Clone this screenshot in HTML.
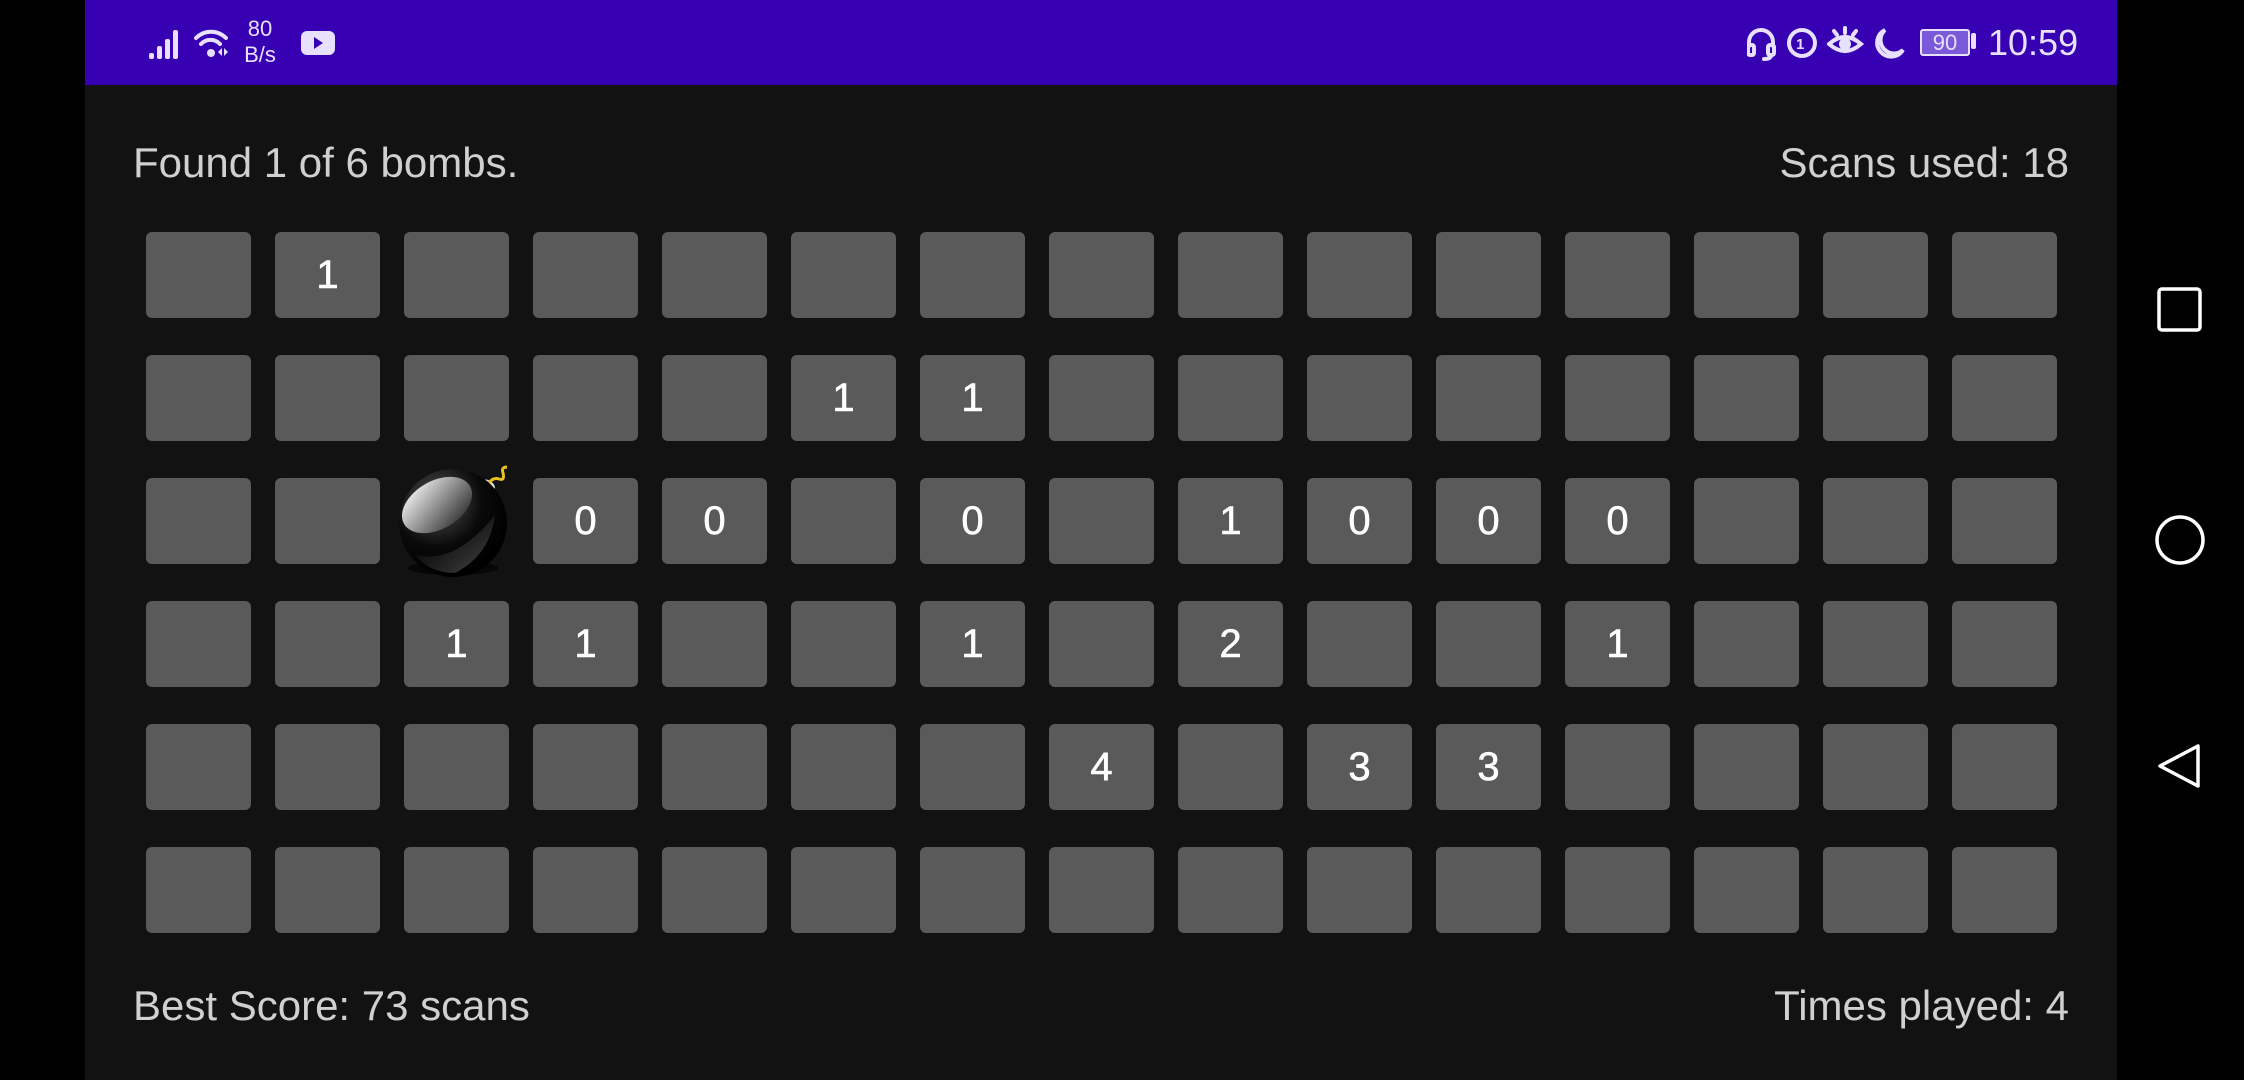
<!DOCTYPE html>
<html><head><meta charset="utf-8"><style>
body{margin:0;width:2244px;height:1080px;background:#000;position:relative;overflow:hidden;font-family:"Liberation Sans",Roboto,sans-serif}
#app{position:absolute;left:85px;top:0;width:2032px;height:1080px;background:#121212}
#sb{position:absolute;left:0;top:0;width:2032px;height:85px;background:#3700b3;color:#e8e0ff}
.t{position:absolute;color:#d0d0d0;font-size:42px;line-height:48px}
#grid{position:absolute;left:61px;top:232px;display:grid;grid-template-columns:repeat(15,105px);grid-auto-rows:86px;column-gap:24px;row-gap:37px}
#grid div{background:#5a5a5a;border-radius:6px;color:#fff;font-size:40px;display:flex;align-items:center;justify-content:center;-webkit-text-stroke:0.6px #fff}
#grid div.b{background:none}
</style></head><body>
<div id="app">
<div id="sb">
<svg style="position:absolute;left:64px;top:24px" width="220" height="48" viewBox="0 0 220 48">
<g fill="#e8e0ff"><rect x="0" y="29" width="5" height="6" rx="2"/><rect x="8" y="22" width="5" height="13" rx="2"/><rect x="16" y="15" width="5" height="20" rx="2"/><rect x="24" y="6" width="5" height="29" rx="2"/>
<circle cx="62" cy="29" r="4"/><path d="M69 28l4-4v8z M75 24l4 4-4 4z"/></g>
<g fill="none" stroke="#e8e0ff" stroke-width="4" stroke-linecap="round"><path d="M47 14a21 21 0 0 1 30 0"/><path d="M52 20a13 13 0 0 1 19 0"/></g>
<rect x="152" y="7" width="34" height="24" rx="6" fill="#e8e0ff"/><path d="M165 13l9 6-9 6z" fill="#3700b3"/>
</svg>
<div style="position:absolute;left:155px;top:16px;font-size:22px;line-height:26px;text-align:center;width:40px">80<br>B/s</div>
<svg style="position:absolute;left:1662px;top:24px" width="180" height="40" viewBox="0 0 180 40">
<g fill="none" stroke="#e8e0ff" stroke-width="4" stroke-linecap="round">
<path d="M2 22v-4a12 12 0 0 1 24 0v4"/><rect x="1" y="21" width="6" height="10" rx="2"/><rect x="21" y="21" width="6" height="10" rx="2"/><path d="M24 31q0 4 -7 4"/>
<circle cx="55" cy="19" r="13"/><path d="M82 20q16-14 32 0q-16 14-32 0"/><path d="M98 4v5M87 7l3 4M109 7l-3 4"/>
<path d="M138 6a14 14 0 1 0 18 20a13 13 0 0 1-18-20z"/></g>
<circle cx="98" cy="20" r="6" fill="#e8e0ff"/>
<text x="49" y="25" font-size="15" font-weight="bold" fill="#e8e0ff" font-family="Liberation Sans">1</text>
</svg>
<div style="position:absolute;left:1835px;top:29px;width:46px;height:23px;background:#7a5ad8;border:2px solid #e8e0ff;border-radius:3px;color:#e8e0ff;font-size:22px;line-height:23px;text-align:center">90</div>
<div style="position:absolute;left:1886px;top:33px;width:5px;height:16px;background:#e8e0ff;border-radius:2px"></div>
<div style="position:absolute;left:1903px;top:22px;font-size:36px;line-height:42px">10:59</div>
</div>
<div class="t" style="left:48px;top:139px">Found 1 of 6 bombs.</div>
<div class="t" style="right:48px;top:139px">Scans used: 18</div>
<div class="t" style="left:48px;top:982px">Best Score: 73 scans</div>
<div class="t" style="right:48px;top:982px">Times played: 4</div>
<div id="grid">
<div></div><div>1</div><div></div><div></div><div></div><div></div><div></div><div></div><div></div><div></div><div></div><div></div><div></div><div></div><div></div>
<div></div><div></div><div></div><div></div><div></div><div>1</div><div>1</div><div></div><div></div><div></div><div></div><div></div><div></div><div></div><div></div>
<div></div><div></div><div class="b"></div><div>0</div><div>0</div><div></div><div>0</div><div></div><div>1</div><div>0</div><div>0</div><div>0</div><div></div><div></div><div></div>
<div></div><div></div><div>1</div><div>1</div><div></div><div></div><div>1</div><div></div><div>2</div><div></div><div></div><div>1</div><div></div><div></div><div></div>
<div></div><div></div><div></div><div></div><div></div><div></div><div></div><div>4</div><div></div><div>3</div><div>3</div><div></div><div></div><div></div><div></div>
<div></div><div></div><div></div><div></div><div></div><div></div><div></div><div></div><div></div><div></div><div></div><div></div><div></div><div></div><div></div>
</div>
<svg style="position:absolute;left:300px;top:455px" width="140" height="130" viewBox="0 0 140 130">
<defs><radialGradient id="g" cx="0.35" cy="0.3" r="0.7"><stop offset="0" stop-color="#555"/><stop offset="0.6" stop-color="#0a0a0a"/><stop offset="1" stop-color="#000"/></radialGradient>
<linearGradient id="h" x1="0" y1="0" x2="0.6" y2="1"><stop offset="0" stop-color="#fff"/><stop offset="1" stop-color="#444"/></linearGradient>
<linearGradient id="h2" x1="0" y1="0" x2="1" y2="1"><stop offset="0" stop-color="#000" stop-opacity="0"/><stop offset="1" stop-color="#aaa"/></linearGradient></defs>
<ellipse cx="68" cy="113" rx="45" ry="7" fill="#000" opacity="0.6"/>
<path d="M85 40l14-14 10 9-14 14z" fill="#222"/>
<ellipse cx="104" cy="30" rx="7" ry="4" fill="#ddd" transform="rotate(40 104 30)"/>
<path d="M104 28q4-6 10-4q6 2 4-6q-2-6 4-6" fill="none" stroke="#e8c020" stroke-width="3"/>
<circle cx="68" cy="68" r="54" fill="url(#g)"/>
<path d="M30 100q40 10 80-40q-5 40-40 58q-25 0-40-18z" fill="url(#h2)" opacity="0.5"/>
<ellipse cx="52" cy="50" rx="38" ry="24" fill="url(#h)" transform="rotate(-30 52 50)"/>
</svg>
</div>
<svg style="position:absolute;left:2150px;top:280px" width="60" height="520" viewBox="0 0 60 520">
<g fill="none" stroke="#fff" stroke-width="3.5"><rect x="9" y="9" width="41" height="41" rx="3"/><circle cx="30" cy="260" r="23"/><path d="M48 466v40l-38-20z" stroke-linejoin="round"/></g>
</svg>
</body></html>
